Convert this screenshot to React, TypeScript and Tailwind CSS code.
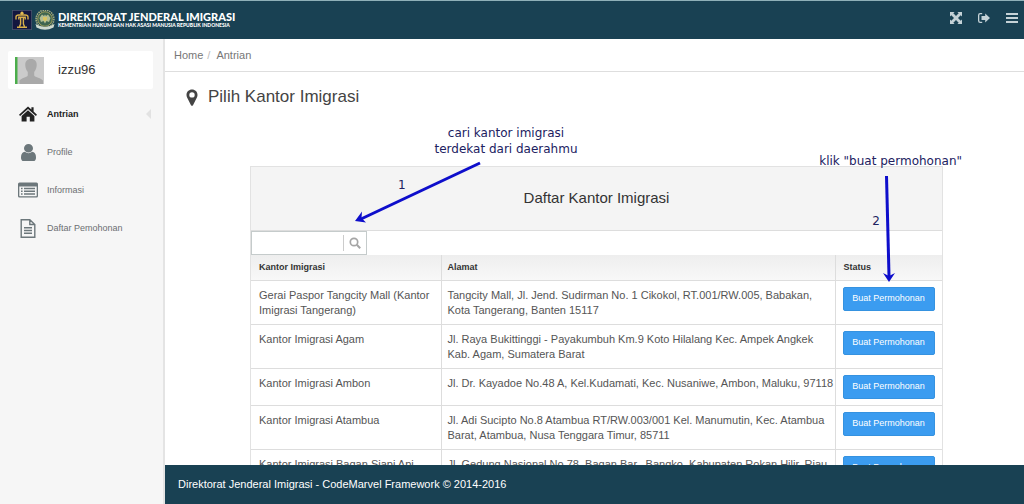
import React from 'react';

interface Office {
    name: string;
    address: string;
}

const offices: Office[] = [
    { name: 'Gerai Paspor Tangcity Mall (Kantor Imigrasi Tangerang)', address: 'Tangcity Mall, Jl. Jend. Sudirman No. 1 Cikokol, RT.001/RW.005, Babakan, Kota Tangerang, Banten 15117' },
    { name: 'Kantor Imigrasi Agam', address: 'Jl. Raya Bukittinggi - Payakumbuh Km.9 Koto Hilalang Kec. Ampek Angkek Kab. Agam, Sumatera Barat' },
    { name: 'Kantor Imigrasi Ambon', address: 'Jl. Dr. Kayadoe No.48 A, Kel.Kudamati, Kec. Nusaniwe, Ambon, Maluku, 97118' },
    { name: 'Kantor Imigrasi Atambua', address: 'Jl. Adi Sucipto No.8 Atambua RT/RW.003/001 Kel. Manumutin, Kec. Atambua Barat, Atambua, Nusa Tenggara Timur, 85711' },
    { name: 'Kantor Imigrasi Bagan Siapi Api', address: 'Jl. Gedung Nasional No.78, Bagan Bar., Bangko, Kabupaten Rokan Hilir, Riau' },
];

const HomeIcon = () => (
    <svg viewBox="0 0 18 16" className="h-4 w-[18px]" fill="currentColor" aria-hidden="true">
        <path d="M9 0.6 12.4 3.6V1.2h2.2v4.4L18 8.7l-1.1 1.2L9 2.9 1.1 9.9 0 8.7z" />
        <path d="M9 4.2 15.4 9.9V15.4H10.8V10.8H7.6V15.4H2.6V9.9z" />
    </svg>
);

const UserIcon = () => (
    <svg viewBox="256 128 1280 1536" className="h-[17px] w-[15px]" preserveAspectRatio="none" fill="currentColor" aria-hidden="true">
        <path d="M1536 1399q0 109-62.5 187t-150.5 78h-854q-88 0-150.5-78t-62.5-187q0-85 8.500-160.500t31.500-152 58.500-131 94-89 134.500-34.500q131 128 313 128t313-128q76 0 134.500 34.500t94 89 58.500 131 31.500 152 8.500 160.500zm-256-887q0 159-112.500 271.500t-271.500 112.500-271.500-112.500-112.500-271.500 112.500-271.500 271.500-112.500 271.500 112.500 112.500 271.500z" />
    </svg>
);

const ListIcon = () => (
    <svg viewBox="0 0 20 16" className="h-4 w-5" fill="currentColor" aria-hidden="true">
        <path fillRule="evenodd" d="M1.5 0.5h17Q20 0.5 20 2v12q0 1.5-1.5 1.5h-17Q0 15.5 0 14V2Q0 0.5 1.5 0.5zM1.300 4.400v9.400q0 0.400 0.400 0.400h16.600q0.400 0 0.400-0.400V4.400z" />
        <path d="M3 5.800h1.600v1.500H3zM6 5.800h11v1.500H6zM3 8.600h1.600v1.500H3zM6 8.600h11v1.500H6zM3 11.300h1.600v1.500H3zM6 11.300h11v1.500H6z" />
    </svg>
);

const FileIcon = () => (
    <svg viewBox="0 0 16 19" className="h-[19px] w-4" fill="none" stroke="currentColor" strokeWidth="1.4" aria-hidden="true">
        <path d="M1.200 0.700h8.600l5 4.800v12.800H1.200zM9.800 0.700v4.800h5M4 8.700h8M4 11.500h8M4 14.300h8" />
    </svg>
);

const ExpandIcon = () => (
    <svg viewBox="0 0 12 12" className="size-3" fill="currentColor" aria-hidden="true">
        <path d="M0 0h4.600L3.300 1.300 6 4l2.700-2.700L7.400 0H12v4.600l-1.300-1.300L8 6l2.700 2.700L12 7.400V12H7.400l1.300-1.300L6 8l-2.700 2.700L4.600 12H0V7.400l1.300 1.300L4 6 1.300 3.300 0 4.600z" />
    </svg>
);

const LogoutIcon = () => (
    <svg viewBox="0 0 12 10" className="h-[10px] w-3" fill="currentColor" aria-hidden="true">
        <path d="M4.200 0v1.300H2.300Q1.300 1.300 1.300 2.300v5.400q0 1 1 1h1.900V10H2.200Q0 10 0 7.800V2.200Q0 0 2.200 0z" />
        <path d="M7.200 0.600 12 5 7.200 9.400V6.900H3.500V3.100h3.700z" />
    </svg>
);

const MenuIcon = () => (
    <svg viewBox="0 0 12 10" className="h-[10px] w-3" fill="currentColor" aria-hidden="true">
        <path d="M0 0h12v2H0zM0 4h12v2H0zM0 8h12v2H0z" />
    </svg>
);

const PinIcon = () => (
    <svg viewBox="0 0 12 17" className="h-[17px] w-3" fill="currentColor" aria-hidden="true">
        <path fillRule="evenodd" d="M6 0.500c3.200 0 5.500 2.300 5.500 5.400 0 1-.2 1.800-.6 2.500L7 16.200q-1 1.200-2 0L1.100 8.400C.7 7.700.5 6.900.5 5.900.5 2.800 2.800.5 6 .5zM6 3.200a2.700 2.700 0 1 0 0 5.400 2.700 2.700 0 0 0 0-5.400z" />
    </svg>
);

const SearchIcon = () => (
    <svg viewBox="0 0 12 12" className="size-3" fill="none" stroke="currentColor" strokeWidth="1.7" aria-hidden="true">
        <circle cx="5" cy="5" r="3.700" />
        <path d="m7.800 7.800 3.400 3.400" strokeWidth="2" />
    </svg>
);

const MinistryLogo = () => (
    <svg viewBox="0 0 20 20" className="size-5" aria-hidden="true">
        <path fill="#14173f" stroke="#6d7086" strokeWidth="0.600" d="M0.300 0.300h19.400v19.400H0.300z" />
        <g fill="none" stroke="#d9b04a" strokeWidth="1.400">
            <path d="M4 9.500V7Q4 5 7 5h6q3 0 3 2v2.500M6.800 9.500V7.300h6.400v2.200" />
            <path d="M8.600 7.500V14L7.500 16.500M11.400 7.500V14l1.100 2.500M5 17.200h10" />
        </g>
        <circle cx="10" cy="3.200" r="1.600" fill="#e5bd51" />
    </svg>
);

const ImmigrationLogo = () => (
    <svg viewBox="0 0 22 20" className="h-5 w-[22px]" aria-hidden="true">
        <circle cx="11" cy="9" r="8.900" fill="none" stroke="#a5ae80" strokeWidth="1.600" strokeDasharray="1.500 0.800" />
        <circle cx="11" cy="9" r="7.300" fill="#3f6550" stroke="#c2b65d" strokeWidth="0.800" />
        <path d="M5.500 8 8 4.500l2 1.500 1-1.500 1 1.500 2-1.500L16.500 8 15 12l-2.500-1L11 13.500 9.500 11 7 12z" fill="#b3bd93" />
        <path d="M9 7h4v2.500L11 11.500 9 9.500z" fill="#d8c463" />
        <path d="M1.500 14Q11 20 20.500 14l-1 3.500Q11 22 2.500 17.500z" fill="#cfd9cf" />
    </svg>
);

const menu = [
    { label: 'Antrian', icon: HomeIcon, active: true },
    { label: 'Profile', icon: UserIcon, active: false },
    { label: 'Informasi', icon: ListIcon, active: false },
    { label: 'Daftar Pemohonan', icon: FileIcon, active: false },
];

const Header = () => (
    <header className="flex h-[39px] shrink-0 items-center justify-between border-t border-[#8fb0b8] bg-[#194153] pl-3 pr-[6px]">
        <a href="#" className="flex items-center">
            <MinistryLogo />
            <span className="ml-[2px]"><ImmigrationLogo /></span>
            <span className="ml-[2px] whitespace-nowrap font-[Lato] font-black text-white">
                <span className="block text-[11px] leading-[11px]">DIREKTORAT JENDERAL IMIGRASI</span>
                <span className="block text-[5px] leading-[7px]">KEMENTRIAN HUKUM DAN HAK ASASI MANUSIA REPUBLIK INDONESIA</span>
            </span>
        </a>
        <div className="flex items-center gap-4 pb-1 text-[#c5d2d7]">
            <button type="button" aria-label="Layar penuh"><ExpandIcon /></button>
            <button type="button" aria-label="Keluar"><LogoutIcon /></button>
            <button type="button" aria-label="Menu"><MenuIcon /></button>
        </div>
    </header>
);

const Sidebar = () => (
    <aside className="w-[165px] shrink-0 border-r-2 border-[#e4e4e4] bg-[#f6f6f6] pt-3">
        <div className="ml-2 mr-[10px] flex h-[38px] items-center rounded-xs bg-white pl-[7px]">
            <svg viewBox="0 0 29 27" className="h-[27px] w-[29px]" aria-hidden="true">
                <path fill="#cbcbcb" d="M0 0h29v27H0z" />
                <path fill="#4cae4c" d="M0 0h2.500v27H0z" />
                <path fill="#a9a9a9" d="M16 2c4 0 6 2.600 5.700 6.500-.2 3-1.300 5-2.500 6.500v3.500c1 2 7 2.500 8.800 5V27H4.500v-3.500c1.800-2.500 7.300-3 8.300-5V15c-1.300-1.500-2.300-3.500-2.500-6.500C10 4.600 12 2 16 2z" />
            </svg>
            <span className="ml-[14px] text-[13px] text-[#333]">izzu96</span>
        </div>
        <nav className="pt-[6px]">
            {menu.map(({ label, icon: Icon, active }) => (
                <a
                    key={label}
                    href="#"
                    aria-current={active ? 'page' : undefined}
                    className={`flex h-[38px] items-center pl-[18px] text-[9px] ${active ? 'font-bold text-[#222]' : 'text-[#6c6f72]'}`}
                >
                    <span className={`flex w-5 justify-center ${active ? 'text-[#222]' : 'text-[#6c777b]'}`}><Icon /></span>
                    <span className="ml-[9px] pt-[2px]">{label}</span>
                    {active && (
                        <svg viewBox="0 0 5 10" className="ml-auto mr-3 h-[10px] w-[5px]" fill="#e2e2e2" aria-hidden="true">
                            <path d="M5 0v10L0 5z" />
                        </svg>
                    )}
                </a>
            ))}
        </nav>
    </aside>
);

const OfficeTable = () => (
    <table className="w-full table-fixed border-collapse text-left text-[#555]">
        <colgroup>
            <col className="w-[190px]" />
            <col />
            <col className="w-[107px]" />
        </colgroup>
        <thead className="bg-linear-to-b from-[#eeeeee] to-[#f8f8f8] text-[9px] leading-4 text-[#333]">
            <tr className="h-[25px]">
                <th className="border-r border-[#dddddd] px-2">Kantor Imigrasi</th>
                <th className="border-r border-[#dddddd] pl-[6px]">Alamat</th>
                <th className="px-2">Status</th>
            </tr>
        </thead>
        <tbody className="text-[11px] leading-[15px]">
            {offices.map((office) => (
                <tr key={office.name} className="border-t border-[#dddddd] align-top">
                    <td className="border-r border-[#dddddd] px-2 pb-[6px] pt-[7px]">{office.name}</td>
                    <td className="border-r border-[#dddddd] pb-[6px] pl-[6px] pt-[7px]">{office.address}</td>
                    <td className="px-[7px] py-[6px]">
                        <button type="button" className="block h-6 w-[92px] rounded-xs border border-[#3592e0] bg-[#3b9cf0] text-[9px] text-white">
                            Buat Permohonan
                        </button>
                    </td>
                </tr>
            ))}
        </tbody>
    </table>
);

// Hand-placed hints that float over the office list
const Hints = () => (
    <div className="pointer-events-none absolute inset-0 font-['DejaVu_Sans',sans-serif] text-[12px] leading-4 text-[#21215f]">
        <p className="absolute left-[180px] top-[-42px] w-[150px] whitespace-nowrap text-center">cari kantor imigrasi<br />terdekat dari daerahmu</p>
        <p className="absolute left-[147px] top-[10px]">1</p>
        <p className="absolute right-[-20px] top-[-14px] whitespace-nowrap">klik &quot;buat permohonan&quot;</p>
        <p className="absolute right-[62px] top-[46px]">2</p>
        <svg viewBox="0 0 130 62" className="absolute left-[102px] top-[-6px] h-[62px] w-[130px]" aria-hidden="true">
            <path d="M127 2 8 58" fill="none" stroke="#0e0ecb" strokeWidth="3" />
            <path d="M2 60 9 50.500 8.500 57l4.500 4.500z" fill="#0e0ecb" />
        </svg>
        <svg viewBox="0 0 14 108" className="absolute right-[46px] top-[8px] h-[108px] w-[14px]" aria-hidden="true">
            <path d="M4.500 1 7 101" fill="none" stroke="#0e0ecb" strokeWidth="3" />
            <path d="M7 107 1 98l6 3 6-3z" fill="#0e0ecb" />
        </svg>
    </div>
);

const App: React.FC = () => {
    return (
        <div className="flex h-screen flex-col overflow-hidden bg-white font-['Liberation_Sans',Arial,sans-serif]">
            <Header />
            <div className="flex min-h-0 flex-1">
                <Sidebar />
                <div className="flex min-w-0 flex-1 flex-col">
                    <nav aria-label="Breadcrumb" className="flex h-[33px] shrink-0 items-center gap-1 border-b border-[#dedede] pl-[9px] text-[11px] text-[#777]">
                        <a href="#">Home</a>
                        <span className="text-[#bbb]">/</span>
                        <a href="#" className="pl-[2px]">Antrian</a>
                    </nav>
                    <main className="min-h-0 flex-1 overflow-hidden">
                        <h1 className="flex h-[50px] items-center gap-[10px] pl-[21px] text-[17px] text-[#444]">
                            <PinIcon />
                            Pilih Kantor Imigrasi
                        </h1>
                        <section className="relative ml-[85px] mr-[81px] mt-[44px] border border-[#e2e2e2]">
                            <h2 className="flex h-[63px] items-center justify-center bg-[#f4f4f4] text-[15px] text-[#333]">Daftar Kantor Imigrasi</h2>
                            <div className="h-[25px] border-t border-[#dddddd]">
                                <div className="flex h-6 w-[116px] items-center border border-[#c5cbcb] bg-white">
                                    <input type="text" aria-label="Cari kantor imigrasi" className="h-4 w-[92px] border-r border-[#ccc] px-2 text-[11px] outline-none" />
                                    <button type="button" aria-label="Cari" className="flex flex-1 justify-center text-[#a5a5a5]"><SearchIcon /></button>
                                </div>
                            </div>
                            <OfficeTable />
                            <Hints />
                        </section>
                    </main>
                    <footer className="flex h-[39px] shrink-0 items-center bg-[#194153] pl-[13px] text-[11px] text-white">
                        Direktorat Jenderal Imigrasi - CodeMarvel Framework © 2014-2016
                    </footer>
                </div>
            </div>
        </div>
    );
};

export default App;
